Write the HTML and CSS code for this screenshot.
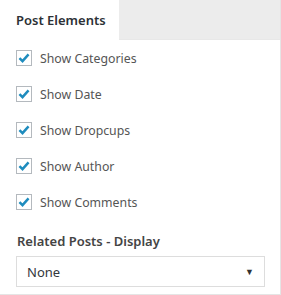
FILE: index.html
```html
<!DOCTYPE html>
<html>
<head>
<meta charset="utf-8">
<link rel="stylesheet" href="styles.css">
</head>
<body>
<div class="panel">
  <div class="tabs">
    <div class="tab">Post Elements</div>
  </div>
  <div class="body">
    <label class="row"><span class="cb"><svg viewBox="0 0 16 16" width="16" height="16"><path d="M2.8 8.2 L6.3 11.6 L13.2 3.8" fill="none" stroke="#1e8cbe" stroke-width="2.8"/></svg></span>Show Categories</label>
    <label class="row"><span class="cb"><svg viewBox="0 0 16 16" width="16" height="16"><path d="M2.8 8.2 L6.3 11.6 L13.2 3.8" fill="none" stroke="#1e8cbe" stroke-width="2.8"/></svg></span>Show Date</label>
    <label class="row"><span class="cb"><svg viewBox="0 0 16 16" width="16" height="16"><path d="M2.8 8.2 L6.3 11.6 L13.2 3.8" fill="none" stroke="#1e8cbe" stroke-width="2.8"/></svg></span>Show Dropcups</label>
    <label class="row"><span class="cb"><svg viewBox="0 0 16 16" width="16" height="16"><path d="M2.8 8.2 L6.3 11.6 L13.2 3.8" fill="none" stroke="#1e8cbe" stroke-width="2.8"/></svg></span>Show Author</label>
    <label class="row"><span class="cb"><svg viewBox="0 0 16 16" width="16" height="16"><path d="M2.8 8.2 L6.3 11.6 L13.2 3.8" fill="none" stroke="#1e8cbe" stroke-width="2.8"/></svg></span>Show Comments</label>
    <div class="label">Related Posts - Display</div>
    <div class="select"><span>None</span><span class="arrow">▼</span></div>
  </div>
</div>
</body>
</html>
```
FILE: styles.css
```css
html, body { margin: 0; padding: 0; background: #fff; }
body { width: 281px; height: 295px; overflow: hidden; font-family: "Noto Sans", "Open Sans", sans-serif; }
.panel {
  width: 280px;
  height: 294px;
  border-right: 1px solid #e5e5e5;
  border-bottom: 1px solid #e5e5e5;
  box-sizing: content-box;
}
.tabs {
  display: flex;
  height: 39px;
  background: #ececec;
  border-bottom: 1px solid #e8e8e8;
}
.tab {
  background: #fff;
  width: 119px;
  height: 40px;
  box-sizing: border-box;
  padding: 11px 0 0 16px;
  font-size: 13px;
  font-weight: 600;
  color: #2c3136;
}
.body { padding: 10px 0 0 16px; }
.row {
  display: flex;
  align-items: center;
  height: 36px;
  font-size: 12.3px;
  color: #555;
}
.row:first-child { margin-top: -10px; }
.cb {
  width: 16px;
  height: 16px;
  border: 1px solid #b4b9be;
  box-sizing: border-box;
  display: flex;
  align-items: center;
  justify-content: center;
  margin-right: 8px;
  background: #fff;
}
.cb svg { width: 14px; height: 14px; }
.label {
  font-size: 13px;
  font-weight: 600;
  color: #444;
  margin-top: 12px;
  padding-left: 1px;
  height: 20px;
}
.select {
  margin-top: 4px;
  width: 249px;
  height: 31px;
  box-sizing: border-box;
  border: 1px solid #ddd;
  display: flex;
  align-items: center;
  justify-content: space-between;
  padding: 0 10px 0 10px;
  font-size: 13px;
  color: #32373c;
}
.arrow { font-size: 9px; color: #333; }
```
